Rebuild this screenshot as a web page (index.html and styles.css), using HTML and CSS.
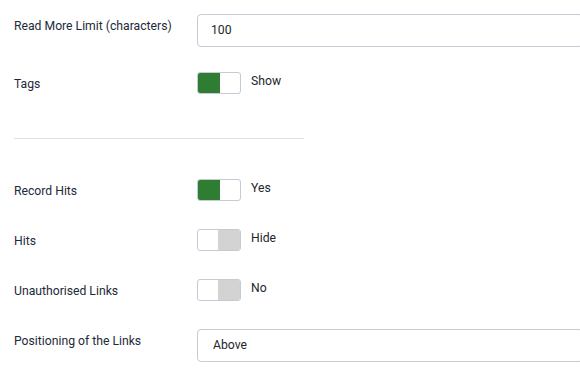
FILE: index.html
```html
<!DOCTYPE html>
<html>
<head>
<meta charset="utf-8">
<link rel="stylesheet" href="styles.css">
</head>
<body>
<div class="form">
  <div class="row row-input">
    <div class="label">Read More Limit (characters)</div>
    <div class="control"><div class="field">100</div></div>
  </div>
  <div class="row">
    <div class="label">Tags</div>
    <div class="control"><span class="switch on"><span class="knob"></span></span><span class="state">Show</span></div>
  </div>
  <hr class="sep">
  <div class="row">
    <div class="label">Record Hits</div>
    <div class="control"><span class="switch on"><span class="knob"></span></span><span class="state">Yes</span></div>
  </div>
  <div class="row">
    <div class="label">Hits</div>
    <div class="control"><span class="switch off"><span class="knob"></span></span><span class="state">Hide</span></div>
  </div>
  <div class="row">
    <div class="label">Unauthorised Links</div>
    <div class="control"><span class="switch off"><span class="knob"></span></span><span class="state">No</span></div>
  </div>
  <div class="row">
    <div class="label">Positioning of the Links</div>
    <div class="control"><div class="field select">Above</div></div>
  </div>
</div>
</body>
</html>
```
FILE: styles.css
```css
html, body {
  margin: 0;
  background: #fff;
}
html {
  overflow: hidden;
}
body {
  width: 580px;
  height: 374px;
  overflow: hidden;
  font-family: Roboto, "Liberation Sans", sans-serif;
  font-size: 12.2px;
  color: #22262a;
}
.form {
  padding: 14px 0 0 14px;
}
.row {
  display: flex;
  align-items: flex-start;
  margin-bottom: 26px;
}
.row-input {
  margin-bottom: 25px;
}
.label {
  width: 183px;
  flex: none;
  line-height: 24px;
  color: #1e2a3a;
}
.control {
  flex: 1;
  display: flex;
  align-items: flex-start;
  min-width: 0;
}
.field {
  box-sizing: border-box;
  width: 386px;
  height: 33px;
  flex: none;
  border: 1px solid #c3cbd6;
  border-radius: 4px;
  padding-left: 13px;
  line-height: 31px;
  color: #22262a;
}
.field.select {
  padding-left: 15px;
}
.switch {
  box-sizing: border-box;
  display: flex;
  width: 44px;
  height: 22px;
  border: 1px solid #c3cbd6;
  border-radius: 3px;
  overflow: hidden;
  background: #fff;
}
.switch .knob {
  width: 22px;
  height: 100%;
}
.switch.on .knob {
  background: #2f7d32;
}
.switch.off {
  justify-content: flex-end;
}
.switch.off .knob {
  background: #d3d3d3;
}
.state {
  margin-left: 10px;
  line-height: 18px;
}
.sep {
  width: 290px;
  margin: 42px 0 40px 0;
  border: 0;
  border-top: 1px solid #dcdfe3;
  height: 0;
}
```
